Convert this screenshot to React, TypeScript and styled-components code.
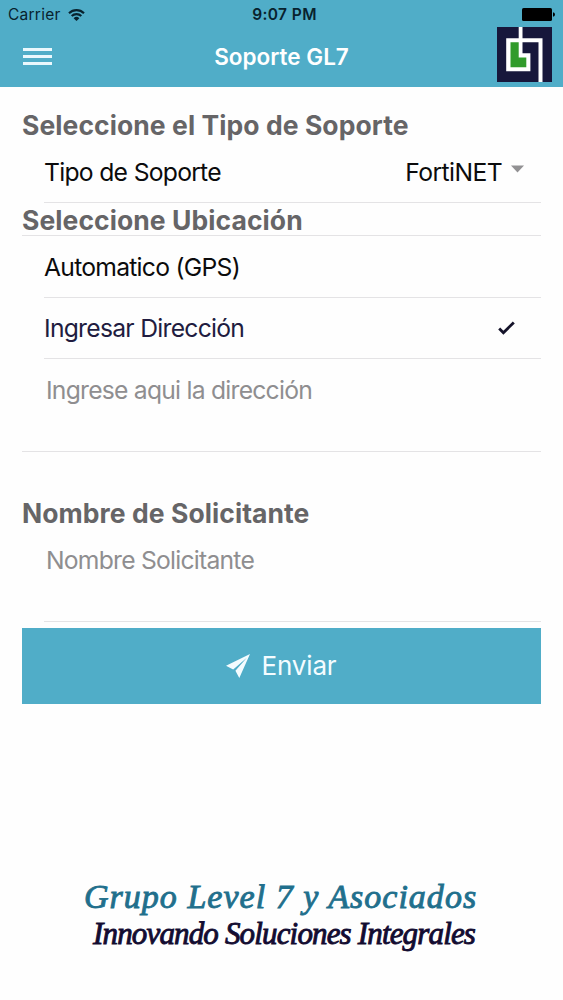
import React from "react";
import styled, { createGlobalStyle } from "styled-components";

const teal = "#50adc8";
const line = "#e4e3e5";

const Global = createGlobalStyle`
  *, *::before, *::after { box-sizing: border-box; }
  body { margin: 0; background: #fefefe; font-family: Inter, "Liberation Sans", sans-serif; }
`;

const Screen = styled.div`
  display: flex;
  flex-direction: column;
  width: 563px;
  height: 1000px;
  overflow: hidden;
  background: #fefefe;
`;

const Header = styled.header`
  height: 87px;
  background: ${teal};
  color: #fff;
`;

const StatusBar = styled.div`
  display: grid;
  grid-template-columns: 1fr auto 1fr;
  align-items: center;
  height: 27px;
  padding: 2px 8px 0 8px;
  color: #08222e;
`;

const Carrier = styled.div`
  display: flex;
  align-items: center;
  gap: 7px;
  font-size: 15.5px;
  letter-spacing: 0.25px;
`;

const Clock = styled.div`
  padding-left: 6px;
  font-size: 15.5px;
  font-weight: 600;
  letter-spacing: 0.4px;
`;

const Battery = styled.svg`
  justify-self: end;
`;

const NavBar = styled.div`
  display: grid;
  grid-template-columns: 43px 1fr 55px;
  align-items: center;
  height: 60px;
  padding: 0 11px 5px 23px;
`;

const Title = styled.h1`
  margin: 0;
  padding-top: 4px;
  text-align: center;
  font-size: 22.5px;
  font-weight: 600;
  line-height: 30px;
`;

const MenuButton = styled.button`
  display: flex;
  flex-direction: column;
  gap: 4px;
  width: 29px;
  padding: 4px 0 0;
  border: 0;
  background: none;
`;

const MenuLine = styled.span`
  height: 3px;
  background: #eaf8fd;
`;

const Form = styled.main`
  display: flex;
  flex-direction: column;
  padding: 0 22px;
`;

const Heading = styled.h2<{ $top: number; $height: number; $ruled?: boolean }>`
  margin: 0;
  padding-top: ${(p) => p.$top}px;
  height: ${(p) => p.$height}px;
  font-size: 26.5px;
  font-weight: 700;
  line-height: 32px;
  color: #666567;
  letter-spacing: 0.07px;
  border-bottom: ${(p) => (p.$ruled ? `1px solid ${line}` : "0")};
`;

const Row = styled.div<{ $height: number; $color?: string }>`
  display: flex;
  align-items: center;
  justify-content: space-between;
  height: ${(p) => p.$height}px;
  margin-left: 22px;
  border-bottom: 1px solid ${line};
  font-size: 24.7px;
  color: ${(p) => p.$color || "#0b0b0c"};
  letter-spacing: -0.75px;
  word-spacing: 0.2px;
`;

const Select = styled.div`
  display: flex;
  align-items: center;
  gap: 9px;
  padding-right: 17px;
  letter-spacing: -0.6px;
`;

const Caret = styled.svg`
  margin-top: -6px;
`;

const Check = styled.svg`
  margin-right: 26px;
`;

const Field = styled.div<{ $indent: number }>`
  height: 93px;
  margin-left: ${(p) => p.$indent}px;
  padding: 15px 0 0 ${(p) => 24 - p.$indent}px;
  border-bottom: 1px solid ${line};
  font-size: 24.7px;
  line-height: 32px;
  color: #8f8e90;
  letter-spacing: -0.77px;
`;

const Submit = styled.button`
  display: flex;
  align-items: center;
  justify-content: center;
  gap: 11px;
  height: 76px;
  margin-top: 6px;
  padding: 0 0 1px;
  border: 0;
  background: ${teal};
  color: #f4fcff;
  font-family: inherit;
  font-size: 26px;
  letter-spacing: -0.15px;
`;

const Footer = styled.footer`
  display: flex;
  flex-direction: column;
  margin-top: 174px;
  white-space: nowrap;
  font-family: "Liberation Serif", serif;
  font-style: italic;
`;

const Company = styled.div`
  padding-left: 84px;
  font-size: 34px;
  line-height: 37px;
  color: #216f8c;
  letter-spacing: 1.02px;
  -webkit-text-stroke: 0.9px #216f8c;
`;

const Slogan = styled.div`
  padding-left: 93px;
  font-size: 31px;
  line-height: 37px;
  color: #130c31;
  letter-spacing: -0.84px;
  -webkit-text-stroke: 0.9px #130c31;
`;

export default function App() {
  return (
    <Screen>
      <Global />
      <Header>
        <StatusBar>
          <Carrier>
            <span>Carrier</span>
            <svg width="17" height="12" viewBox="0 0 17 12" fill="none" stroke="#08222e" strokeWidth="2.1">
              <path d="M1 4.2a10.7 10.7 0 0 1 15 0" />
              <path d="M3.7 7.1a6.8 6.8 0 0 1 9.6 0" />
              <path d="M8.5 12 5.6 9.2a4.1 4.1 0 0 1 5.8 0Z" fill="#08222e" stroke="none" />
            </svg>
          </Carrier>
          <Clock>9:07 PM</Clock>
          <Battery width="33" height="13" viewBox="0 0 33 13">
            <rect width="30" height="13" rx="1.6" fill="#000" />
            <path d="M31 4.3q2 .4 2 2.2t-2 2.2Z" fill="#000" />
          </Battery>
        </StatusBar>
        <NavBar>
          <MenuButton aria-label="Menu">
            <MenuLine />
            <MenuLine />
            <MenuLine />
          </MenuButton>
          <Title>Soporte GL7</Title>
          <svg width="55" height="55" viewBox="0 0 55 55">
            <path fill="#17173b" d="M0 0h55v55H0z" />
            <path fill="#fff" d="M21.7 0h3.8v11.3h20V55H41.5V15.3h-16v11h7.9v17.9H9.2V11.3h12.5z" />
            <path fill="#319b2b" d="M13.5 15.3h8.2v15.2h7.6v9.7H13.5z" />
          </svg>
        </NavBar>
      </Header>
      <Form>
        <Heading $top={22} $height={55}>Seleccione el Tipo de Soporte</Heading>
        <Row $height={61}>
          <span>Tipo de Soporte</span>
          <Select>
            <span>FortiNET</span>
            <Caret width="13" height="8" viewBox="0 0 13 8">
              <path d="M0 .5h13L6.5 7.5z" fill="#929193" />
            </Caret>
          </Select>
        </Row>
        <Heading $top={1} $height={33} $ruled>Seleccione Ubicación</Heading>
        <Row $height={62}>Automatico (GPS)</Row>
        <Row $height={61} $color="#211c40">
          <span>Ingresar Dirección</span>
          <Check width="17" height="14" viewBox="0 0 17 14" fill="none" stroke="#15132a" strokeWidth="2.8">
            <path d="m1.2 7.5 4.2 4.2L15.8 1.4" />
          </Check>
        </Row>
        <Field $indent={0}>Ingrese aqui la dirección</Field>
        <Heading $top={45} $height={77}>Nombre de Solicitante</Heading>
        <Field $indent={22}>Nombre Solicitante</Field>
        <Submit>
          <svg width="24" height="24" viewBox="0 0 24 24" fill="currentColor">
            <path d="M24 0 0 11.8l7.2 3.6L20.8 3.8 9.4 16.7 13.3 24z" />
          </svg>
          <span>Enviar</span>
        </Submit>
      </Form>
      <Footer>
        <Company>Grupo Level 7 y Asociados</Company>
        <Slogan>Innovando Soluciones Integrales</Slogan>
      </Footer>
    </Screen>
  );
}
